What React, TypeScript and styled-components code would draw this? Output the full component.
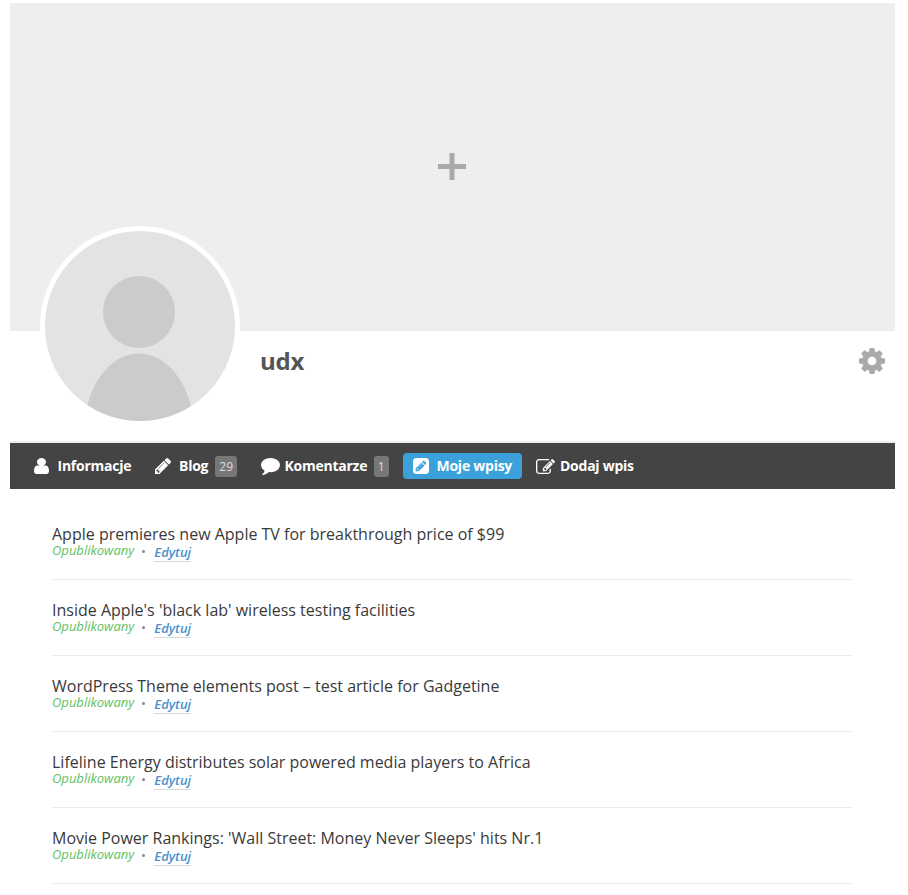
import React from 'react';
import styled, { createGlobalStyle, css } from 'styled-components';

const GlobalStyle = createGlobalStyle`
  * { box-sizing: border-box; }
  body {
    margin: 0;
    background: #fff;
    font-family: 'Open Sans', 'Noto Sans', sans-serif;
    overflow: hidden;
  }
`;

const Page = styled.main`
  width: 908px;
  height: 895px;
  padding: 3px 13px 0 10px;
  overflow: hidden;
`;

const Cover = styled.div`
  height: 328px;
  background: #eee;
  display: flex;
  align-items: center;
  justify-content: center;
`;

const PlusIcon = styled.svg`
  width: 28px;
  height: 28px;
  margin-right: 1px;
  fill: #aaa;
`;

const ProfileBar = styled.header`
  height: 112px;
  padding: 0 10px 0 30px;
  display: flex;
  align-items: flex-start;
  border-bottom: 2px solid #eee;
`;

const Avatar = styled.svg`
  width: 200px;
  height: 200px;
  flex: none;
  margin-top: -105px;
  border: 5px solid #fff;
  border-radius: 50%;
  background: #e3e3e3;
  fill: #cbcbcb;
`;

const UserName = styled.h1`
  margin: 13px auto 0 20px;
  font-size: 24px;
  line-height: 33px;
  font-weight: 700;
  letter-spacing: -0.2px;
  color: #555;
`;

const Glyph = styled.svg<{ $width: number; $height: number }>`
  width: ${(p) => p.$width}px;
  height: ${(p) => p.$height}px;
  flex: none;
  fill: currentColor;
`;

const SettingsButton = styled.button`
  margin: 17px 0 0;
  padding: 0;
  border: 0;
  background: none;
  color: #aaa;
  display: flex;
`;

const Nav = styled.nav`
  height: 46px;
  padding-left: 14px;
  background: #444;
  display: flex;
  align-items: center;
`;

const Tab = styled.a<{ $active?: boolean; $gap: number; $width: number }>`
  width: ${(p) => p.$width}px;
  height: 26px;
  padding-left: 10px;
  margin-right: 4px;
  display: flex;
  align-items: center;
  gap: ${(p) => p.$gap}px;
  border-radius: 4px;
  color: #fff;
  font-size: 14px;
  font-weight: 700;
  line-height: 26px;
  letter-spacing: -0.25px;
  white-space: nowrap;
  ${(p) => p.$active && css`background: #3ba1da;`}
`;

const Count = styled.span<{ $offset: number }>`
  height: 21px;
  margin-left: ${(p) => p.$offset}px;
  padding: 0 4px;
  border-radius: 3px;
  background: #777;
  color: #ddd;
  font-size: 12px;
  font-weight: 400;
  line-height: 21px;
  letter-spacing: 0;
`;

const PostList = styled.ul`
  margin: 15px 43px 0 42px;
  padding: 0;
  list-style: none;
`;

const Post = styled.li`
  height: 76px;
  padding-top: 21px;
  border-bottom: 1px solid #ebebeb;
`;

const PostTitle = styled.div`
  height: 18px;
  font-size: 16px;
  line-height: 18px;
  color: #3a3a3a;
  white-space: nowrap;
`;

const Meta = styled.div`
  display: flex;
  align-items: flex-start;
  font-size: 13px;
  line-height: 14px;
  font-style: italic;
`;

const Status = styled.span`
  color: #5fc15f;
`;

const Dot = styled.span`
  width: 3px;
  height: 3px;
  margin: 7px 9px 0 8px;
  border-radius: 50%;
  background: #888;
`;

const EditLink = styled.a`
  height: 19px;
  line-height: 18px;
  font-weight: 600;
  color: #4f90cd;
  border-bottom: 1px solid #d8d8d8;
`;

const icons = {
  user: {
    box: '0 128 1280 1536',
    d: 'M1280 1399q0 109-62.5 187t-150.5 78h-854q-88 0-150.5-78t-62.5-187q0-85 8.500-160.500t31.500-152 58.500-131 94-89 134.500-34.500q131 128 313 128t313-128q76 0 134.500 34.500t94 89 58.500 131 31.500 152 8.500 160.500zM1024 512q0 159-112.500 271.500t-271.500 112.500-271.500-112.500-112.500-271.500 112.500-271.500 271.500-112.500 271.500 112.500 112.500 271.500zM330 880h620v200h-620z',
  },
  pencil: {
    box: '128 149 1515 1515',
    d: 'M491 1536l91-91-235-235-91 91v107h128v128h107zm523-928q0-22-22-22-10 0-17 7l-542 542q-7 7-7 17 0 22 22 22 10 0 17-7l542-542q7-7 7-17zm-54-192l416 416-832 832h-416v-416zm683 96q0 53-37 90l-166 166-416-416 166-165q36-38 90-38 53 0 91 38l235 234q37 39 37 91z',
  },
  comment: {
    box: '0 256 1792 1536',
    d: 'M1792 896q0 174-120 321.500t-326 233-450 85.500q-70 0-145-8-198 175-460 242-49 14-114 22-17 2-30.500-9t-17.500-29v-1q-3-4-.5-12t2-10 4.500-9.500l6-9 7-8.500 8-9q7-8 31-34.500t34.500-38 31-39.500 32.500-51 27-59 26-76q-157-89-247.500-220t-90.500-281q0-130 71-248.500t191-204.500 286-136.500 348-50.500q244 0 450 85.500t326 233 120 321.500z',
  },
  pencilSquare: {
    box: '0 128 1536 1536',
    d: 'M404 1108l152 152-52 52h-56v-96h-96v-56zm414-390q14 13-3 30l-291 291q-17 17-30 3-14-13 3-30l291-291q17-17 30-3zm-274 690l544-544-288-288-544 544v288h288zm608-608l92-92q28-28 28-68t-28-68l-152-152q-28-28-68-28t-68 28l-92 92zm384-384v960q0 119-84.500 203.500t-203.500 84.500h-960q-119 0-203.500-84.500t-84.500-203.500v-960q0-119 84.500-203.500t203.500-84.500h960q119 0 203.500 84.500t84.500 203.500z',
  },
  edit: {
    box: '0 128 1792 1408',
    d: 'M888 1184l116-116-152-152-116 116v56h96v96h56zm440-720q-16-16-33 1l-350 350q-17 17-1 33t33-1l350-350q17-17 1-33zm80 594v190q0 119-84.500 203.500t-203.500 84.500h-832q-119 0-203.500-84.500t-84.500-203.500v-832q0-119 84.500-203.500t203.500-84.500h832q63 0 117 25 15 7 18 23 3 17-9 29l-49 49q-14 14-32 8-23-6-45-6h-832q-66 0-113 47t-47 113v832q0 66 47 113t113 47h832q66 0 113-47t47-113v-126q0-13 9-22l64-64q15-15 35-7t20 29zm-96-738l288 288-672 672h-288v-288zm444 132l-92 92-288-288 92-92q28-28 68-28t68 28l152 152q28 28 28 68t-28 68z',
  },
  cog: {
    box: '128 128 1536 1536',
    d: 'M1152 896q0-106-75-181t-181-75-181 75-75 181 75 181 181 75 181-75 75-181zm512-109v222q0 12-8 23t-20 13l-185 28q-19 54-39 91 35 50 107 138 10 12 10 25t-9 23q-27 37-99 108t-94 71q-12 0-26-9l-138-108q-44 23-91 38-16 136-29 186-7 28-36 28h-222q-14 0-24.500-8.500t-11.500-21.500l-28-184q-49-16-90-37l-141 107q-10 9-25 9-14 0-25-11-126-114-165-168-7-10-7-23 0-12 8-23 15-21 51-66.500t54-70.500q-27-50-41-99l-183-27q-13-2-21-12.500t-8-23.500v-222q0-12 8-23t19-13l186-28q14-46 39-92-40-57-107-138-10-12-10-24 0-10 9-23 26-36 98.500-107.500t94.500-71.500q13 0 26 10l138 107q44-23 91-38 16-136 29-186 7-28 36-28h222q14 0 24.500 8.500t11.500 21.500l28 184q49 16 90 37l142-107q9-9 24-9 13 0 25 10 129 119 165 170 7 8 7 22 0 12-8 23-15 21-51 66.500t-54 70.500q26 50 41 98l183 28q13 2 21 12.500t8 23.500z',
  },
};

type IconName = keyof typeof icons;

function Icon({ name, width, height }: { name: IconName; width: number; height: number }) {
  return (
    <Glyph
      $width={width}
      $height={height}
      viewBox={icons[name].box}
      preserveAspectRatio="none"
      aria-hidden="true"
    >
      <path d={icons[name].d} />
    </Glyph>
  );
}

interface TabItem {
  label: string;
  icon: IconName;
  iconWidth: number;
  iconHeight: number;
  gap: number;
  width: number;
  count?: number;
  countOffset?: number;
  active?: boolean;
}

const tabs: TabItem[] = [
  { label: 'Informacje', icon: 'user', iconWidth: 15, iconHeight: 16, gap: 8.5, width: 117 },
  { label: 'Blog', icon: 'pencil', iconWidth: 16, iconHeight: 16, gap: 8, width: 102, count: 29, countOffset: -1 },
  { label: 'Komentarze', icon: 'comment', iconWidth: 19, iconHeight: 17, gap: 4.5, width: 148, count: 1, countOffset: 2 },
  { label: 'Moje wpisy', icon: 'pencilSquare', iconWidth: 16, iconHeight: 16, gap: 7.5, width: 119, active: true },
  { label: 'Dodaj wpis', icon: 'edit', iconWidth: 19, iconHeight: 15, gap: 5, width: 120 },
];

const posts = [
  'Apple premieres new Apple TV for breakthrough price of $99',
  "Inside Apple's 'black lab' wireless testing facilities",
  'WordPress Theme elements post – test article for Gadgetine',
  'Lifeline Energy distributes solar powered media players to Africa',
  "Movie Power Rankings: 'Wall Street: Money Never Sleeps' hits Nr.1",
];

export default function App() {
  return (
    <Page>
      <GlobalStyle />
      <Cover>
        <PlusIcon viewBox="0 0 28 28">
          <path d="M11.500 0h5v11H28v5H16.500V27h-5V16H0v-5h11.500z" />
        </PlusIcon>
      </Cover>
      <ProfileBar>
        <Avatar viewBox="0 0 190 190">
          <circle cx="94" cy="81" r="36" />
          <ellipse cx="94" cy="201" rx="55" ry="78.500" />
        </Avatar>
        <UserName>udx</UserName>
        <SettingsButton aria-label="Ustawienia">
          <Icon name="cog" width={26} height={26} />
        </SettingsButton>
      </ProfileBar>
      <Nav>
        {tabs.map((tab) => (
          <Tab key={tab.label} $active={tab.active} $gap={tab.gap} $width={tab.width}>
            <Icon name={tab.icon} width={tab.iconWidth} height={tab.iconHeight} />
            {tab.label}
            {tab.count !== undefined && <Count $offset={tab.countOffset ?? 0}>{tab.count}</Count>}
          </Tab>
        ))}
      </Nav>
      <PostList>
        {posts.map((title) => (
          <Post key={title}>
            <PostTitle>{title}</PostTitle>
            <Meta>
              <Status>Opublikowany</Status>
              <Dot />
              <EditLink>Edytuj</EditLink>
            </Meta>
          </Post>
        ))}
      </PostList>
    </Page>
  );
}
